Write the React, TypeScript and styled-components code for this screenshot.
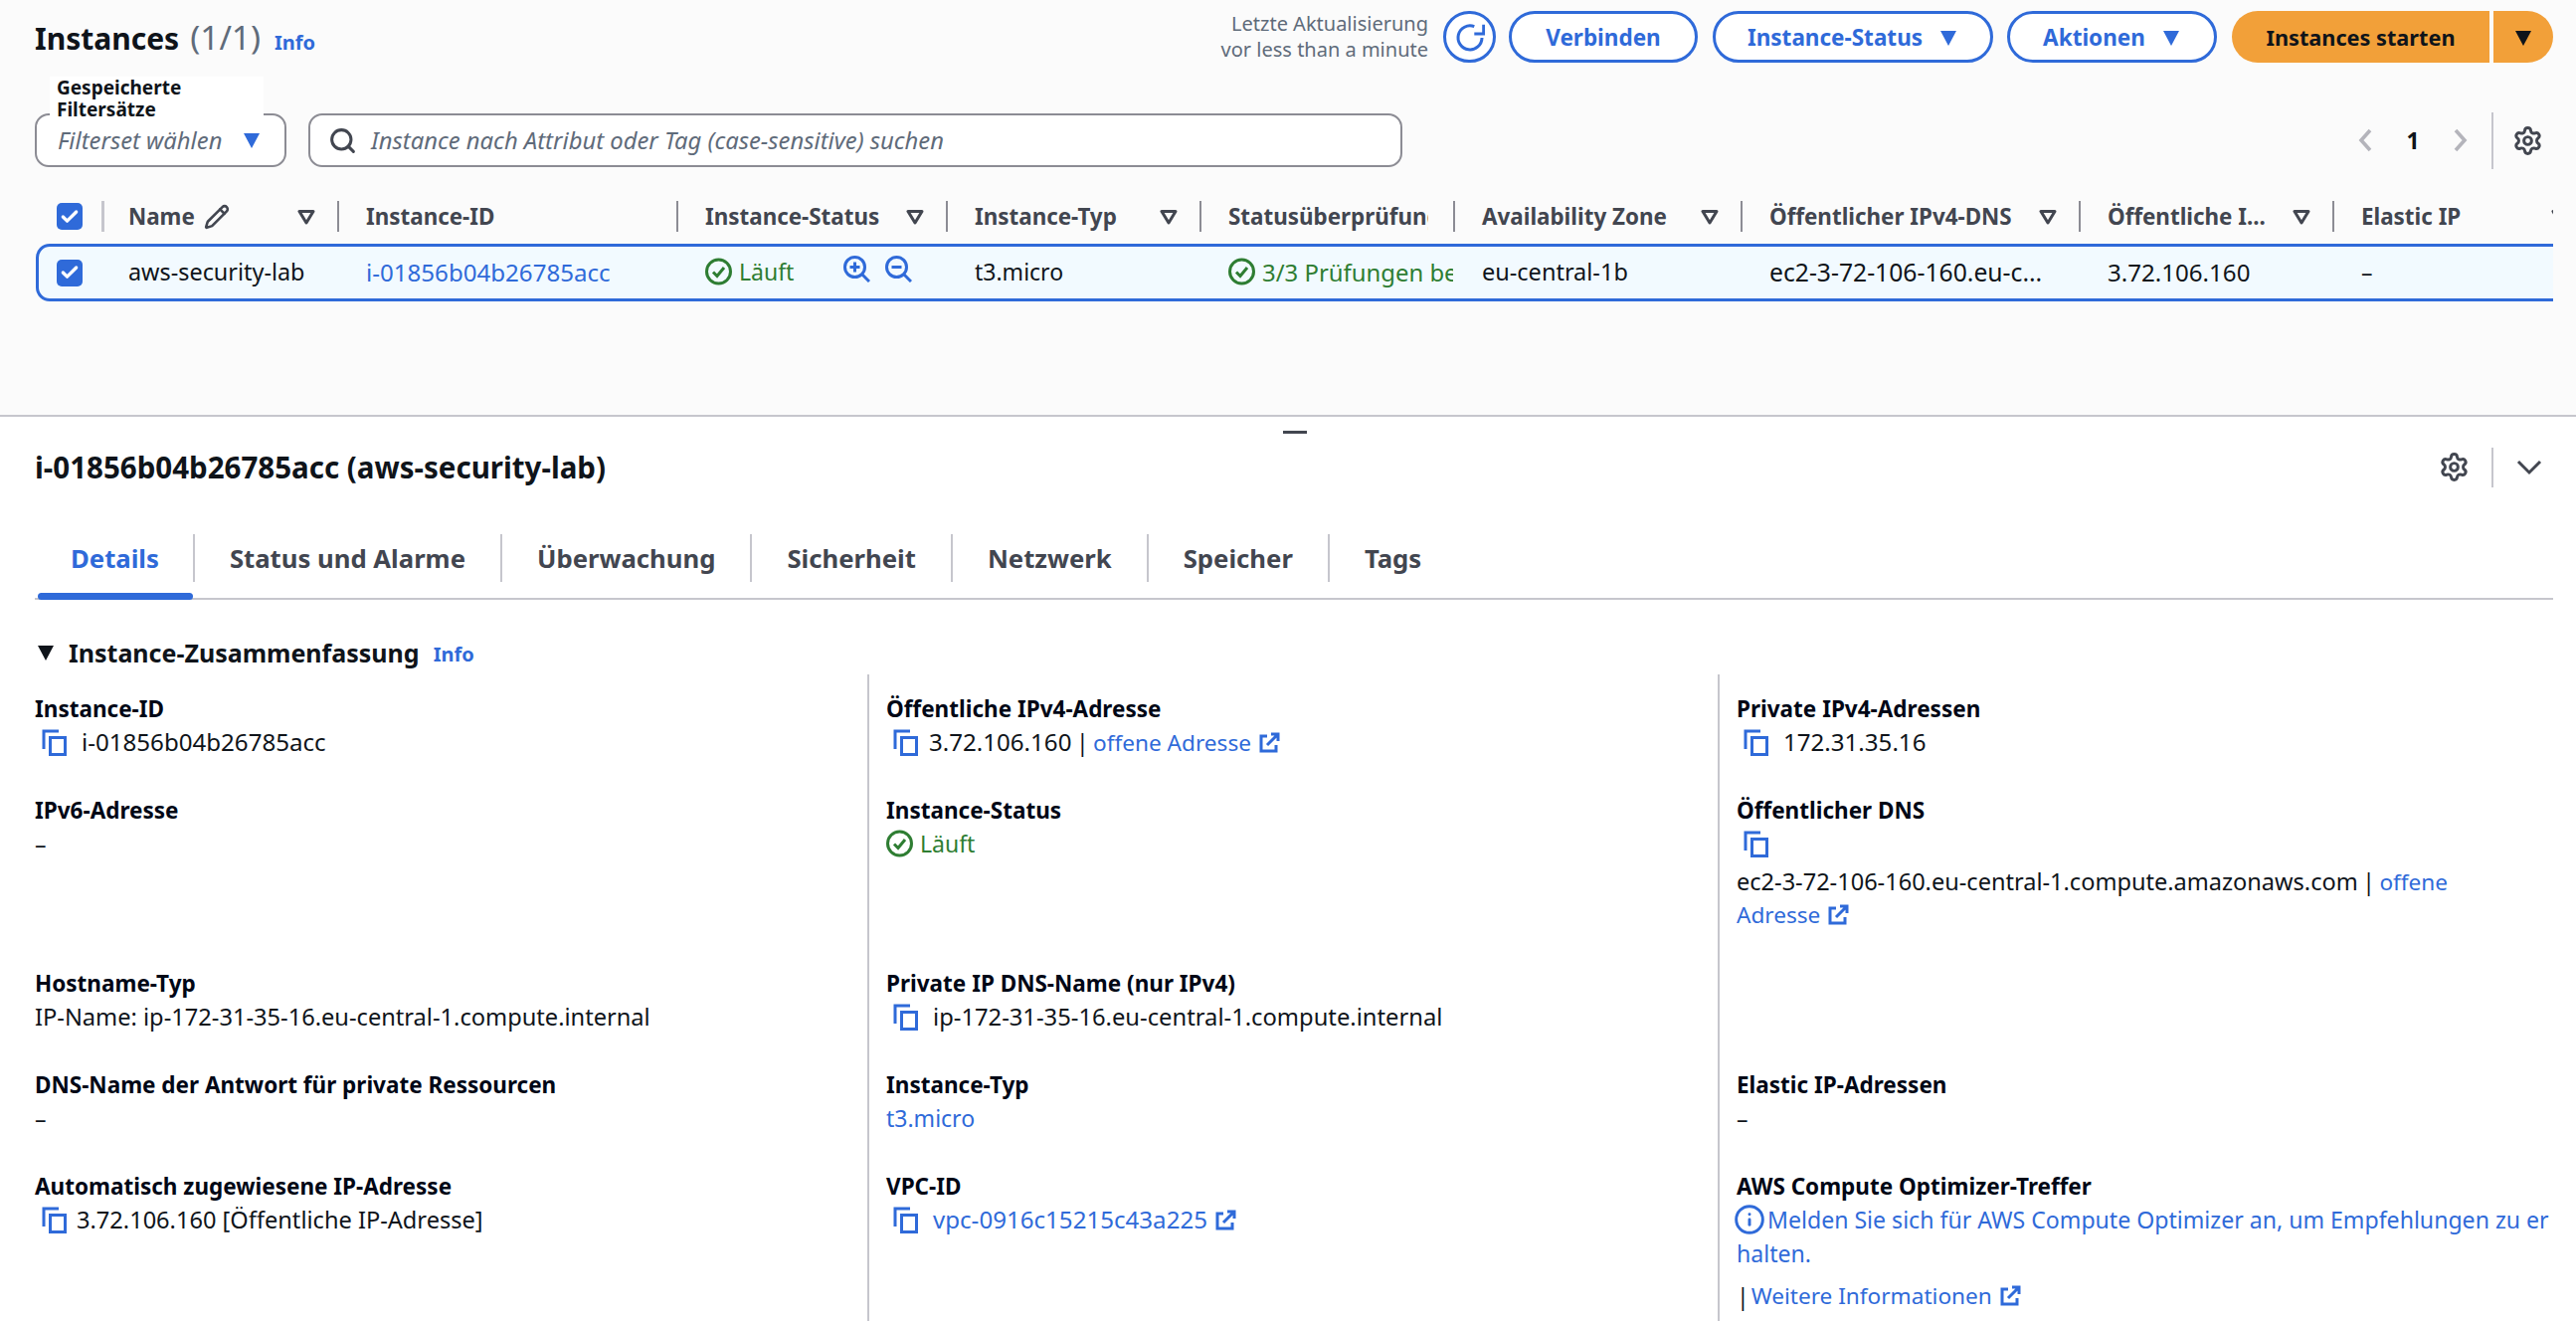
import { ReactNode } from "react";
import styled, { createGlobalStyle } from "styled-components";
import { Info, Pencil, Search, Settings, Check } from "lucide-react";

const BLUE = "#2f6ad9";
const GREEN = "#2e7d32";
const TEXT = "#0f141a";
const MUTED = "#424650";

const GlobalStyle = createGlobalStyle`
  html, body { margin: 0; padding: 0; background: #fff; }
  body {
    font-family: "Noto Sans", "Open Sans", sans-serif;
    font-size: 23px;
    color: ${TEXT};
    width: 2590px;
    height: 1328px;
    overflow: hidden;
  }
  * { box-sizing: border-box; }
`;

const Top = styled.section`
  height: 419px;
  background: #fbfbfb;
  border-bottom: 2px solid #c6c6cd;
`;

const HeaderRow = styled.div`
  display: flex;
  justify-content: space-between;
  align-items: flex-start;
  height: 63px;
  padding: 11px 23px 0 35px;
`;

const Title = styled.h1`
  margin: 4px 0 0;
  font-size: 30px;
  line-height: 44px;
  font-weight: 700;
  display: flex;
  align-items: baseline;
`;

const Count = styled.span`
  font-size: 33.5px;
  font-weight: 400;
  color: #5f6b7a;
  margin: 0 14px 0 11px;
`;

const InfoLink = styled.a`
  font-size: 20px;
  font-weight: 700;
  color: ${BLUE};
`;

const Actions = styled.div`
  display: flex;
  align-items: center;
`;

const Updated = styled.div`
  font-size: 20px;
  line-height: 26px;
  color: #5f6b7a;
  text-align: right;
  margin-right: 15px;
`;

const Pill = styled.button<{ $width: number; $gap?: number }>`
  width: ${(p) => p.$width}px;
  height: 52px;
  margin-right: ${(p) => p.$gap ?? 15}px;
  border: 3px solid ${BLUE};
  border-radius: 26px;
  background: #fff;
  color: ${BLUE};
  font: 700 22.5px "Noto Sans", sans-serif;
  display: flex;
  align-items: center;
  justify-content: center;
  gap: 16px;
  padding: 1px 0 0;
`;

const Primary = styled.button<{ $side?: boolean }>`
  height: 52px;
  width: ${(p) => (p.$side ? 60 : 259)}px;
  margin-left: ${(p) => (p.$side ? 4 : 0)}px;
  border: 0;
  border-radius: ${(p) => (p.$side ? "0 26px 26px 0" : "26px 0 0 26px")};
  background: #f2a039;
  color: ${TEXT};
  font: 700 21.7px "Noto Sans", sans-serif;
  padding: 1px 0 0;
  display: flex;
  align-items: center;
  justify-content: center;
`;

const FilterRow = styled.div`
  display: flex;
  align-items: center;
  margin-top: 51px;
  padding: 0 33px 0 35px;
  height: 54px;
`;

const FilterBox = styled.div`
  position: relative;
  width: 253px;
  height: 54px;
  margin-right: 22px;
  border: 2px solid #8c8c94;
  border-radius: 14px;
  background: #fff;
  display: flex;
  align-items: center;
  justify-content: space-between;
  padding: 0 23px 0 21px;
`;

const FilterLabel = styled.label`
  position: absolute;
  left: 13px;
  top: -39px;
  width: 215px;
  padding-left: 7px;
  background: #fff;
  font-size: 19px;
  line-height: 22px;
  font-weight: 700;
  color: ${TEXT};
`;

const Placeholder = styled.span`
  font-size: 23.8px;
  font-style: italic;
  color: #5f6b7a;
`;

const SearchBox = styled.div`
  width: 1100px;
  height: 54px;
  border: 2px solid #8c8c94;
  border-radius: 14px;
  background: #fff;
  display: flex;
  align-items: center;
  gap: 14px;
  padding-left: 18px;
`;

const Pager = styled.div`
  margin-left: auto;
  display: flex;
  align-items: center;
  height: 57px;
`;

const PageNumber = styled.span`
  width: 14px;
  margin: 0 34px;
  text-align: center;
  font-weight: 700;
  color: ${TEXT};
`;

const PagerDivider = styled.span`
  width: 2px;
  height: 57px;
  background: #c6c6cd;
  margin: 0 19px 0 24px;
`;

const Table = styled.div`
  width: 2567px;
  overflow: hidden;
  padding: 34px 0 0 36px;
`;

const HeadRow = styled.div`
  display: grid;
  grid-template-columns: 66px 237px 341px 271px 255px 255px 289px 340px 255px 260px;
  height: 43px;
  width: 2700px;
`;

const HeadCell = styled.div<{ $light?: boolean }>`
  height: 31px;
  border-left: ${(p) => (p.$light ? "3px solid #c6c6cd" : "2px solid #8c8c94")};
  padding: 0 22px 0 ${(p) => (p.$light ? 24 : 27)}px;
  display: flex;
  align-items: center;
  justify-content: space-between;
  font-size: 22.4px;
  font-weight: 700;
  color: ${MUTED};
  white-space: nowrap;
`;

const HeadBox = styled.div`
  height: 31px;
  display: flex;
  align-items: center;
`;

const HeadLabel = styled.span<{ $clip?: boolean }>`
  display: flex;
  align-items: center;
  gap: 9px;
  ${(p) => p.$clip && "width: 201px; overflow: hidden;"}
`;

const CheckBox = styled.span<{ $inset: number }>`
  width: 26px;
  height: 27px;
  margin-left: ${(p) => p.$inset}px;
  border-radius: 5px;
  background: ${BLUE};
  display: flex;
  align-items: center;
  justify-content: center;
`;

const BodyRow = styled.div`
  display: grid;
  grid-template-columns: 61px 239px 341px 271px 255px 255px 289px 340px 255px 260px;
  width: 2700px;
  height: 58px;
  border: 3px solid ${BLUE};
  border-radius: 14px 0 0 14px;
  background: #f2faff;
`;

const BodyCell = styled.div<{ $first?: boolean }>`
  display: flex;
  align-items: center;
  padding: 0 0 ${(p) => (p.$first ? 0 : 2)}px ${(p) => (p.$first ? 0 : 29)}px;
  white-space: nowrap;
  overflow: hidden;
`;

const Num = styled.span<{ $size?: number }>`
  font-size: ${(p) => p.$size ?? 24.1}px;
`;

const StatusText = styled.span`
  display: inline-flex;
  align-items: center;
  gap: 7px;
  color: ${GREEN};
`;

const ZoomIcons = styled.span`
  display: flex;
  gap: 15px;
  margin: 0 0 6px 50px;
`;

const Link = styled.a`
  color: ${BLUE};
`;

const OutLink = styled(Link)`
  font-size: 22.6px;
`;

const Sep = styled.span`
  margin: 0 -1.5px;
`;

const Bottom = styled.section`
  position: relative;
`;

const Handle = styled.span`
  position: absolute;
  left: 1290px;
  top: 14px;
  width: 24px;
  height: 3px;
  background: #424650;
`;

const DetailHead = styled.div`
  height: 118px;
  padding: 14px 34px 31px 35px;
  display: flex;
  align-items: center;
  justify-content: space-between;
`;

const DetailTitle = styled.h2`
  margin: 0;
  font-size: 29.5px;
  font-weight: 700;
`;

const DetailTools = styled.div`
  display: flex;
  align-items: center;
  color: ${MUTED};
`;

const ToolDivider = styled.span`
  width: 2px;
  height: 40px;
  background: #c6c6cd;
  margin: 0 23px 0 22px;
`;

const Tabs = styled.nav`
  display: flex;
  align-items: flex-start;
  height: 66px;
  margin: 0 23px 0 35px;
  border-bottom: 2px solid #c6c6cd;
  position: relative;
`;

const Tab = styled.a<{ $active?: boolean; $first?: boolean }>`
  height: 48px;
  padding: 0 ${(p) => (p.$first ? 34 : 35)}px 0 ${(p) => (p.$first ? 36 : 35)}px;
  display: flex;
  align-items: center;
  font-size: 25.7px;
  font-weight: 700;
  color: ${(p) => (p.$active ? BLUE : MUTED)};
  border-left: ${(p) => (p.$first ? "0" : "2px solid #c6c6cd")};
`;

const TabBar = styled.span`
  position: absolute;
  left: 3px;
  bottom: -2px;
  width: 156px;
  height: 7px;
  border-radius: 4px;
  background: ${BLUE};
`;

const SectionHead = styled.div`
  height: 75px;
  padding: 35px 0 4px 38px;
  display: flex;
  align-items: center;
  font-size: 25px;
  font-weight: 700;
  line-height: 36px;
`;

const SectionCaret = styled.svg`
  margin-right: 15px;
`;

const SectionInfo = styled(InfoLink)`
  margin-left: 14px;
  margin-top: 4px;
`;

const Summary = styled.div`
  display: grid;
  grid-template-columns: 837px 855px 840px;
  grid-template-rows: 98px 174px 102px 102px 174px;
  margin-left: 35px;
`;

const Cell = styled.div<{ $edge?: boolean; $pad: number }>`
  padding: ${(p) => p.$pad}px 0 0 ${(p) => (p.$edge ? 0 : 17)}px;
  border-left: ${(p) => (p.$edge ? "0" : "2px solid #c6c6cd")};
  line-height: 34px;
`;

const Label = styled.div`
  height: 34px;
  line-height: 36px;
  font-size: 22.5px;
  font-weight: 700;
  color: #000716;
`;

const Value = styled.div<{ $gap?: number }>`
  display: flex;
  align-items: center;
  min-height: 34px;
  gap: ${(p) => p.$gap ?? 15}px;
`;

const CopyWrap = styled.svg`
  margin-left: 7px;
  flex: none;
`;

const Ext = styled.svg`
  margin-left: 8px;
  vertical-align: -2px;
`;

const Dns = styled.div`
  margin-top: 5px;
  line-height: 33px;
`;

const Optimizer = styled.div`
  color: ${BLUE};
  font-size: 23.1px;
`;

const OptimizerIcon = styled(Info)`
  vertical-align: -7px;
  margin: 0 2px 0 -3px;
`;

const Further = styled.div`
  margin-top: 8px;
  display: flex;
  align-items: center;
  gap: 2px;
`;

function Copy() {
  return (
    <CopyWrap width="25" height="27" viewBox="0 0 25 27" fill="none" stroke={BLUE} strokeWidth="3">
      <path d="M2 20V2h15" />
      <rect x="8.5" y="8.5" width="15" height="17" />
    </CopyWrap>
  );
}

function External() {
  return (
    <Ext width="21" height="21" viewBox="0 0 21 21" fill="none" stroke={BLUE} strokeWidth="3">
      <path d="M8 4H2v15h15v-6" />
      <path d="M12 2h7v7M19 2 8 13" />
    </Ext>
  );
}

function Caret({ color, size = 20 }: { color: string; size?: number }) {
  return (
    <svg width={size} height={size} viewBox="0 0 20 20" fill={color}>
      <path d="M2 3h16L10 18z" />
    </svg>
  );
}

function SortCaret() {
  return (
    <svg width="18" height="16" viewBox="0 0 18 16" fill="none" stroke={MUTED} strokeWidth="3" strokeLinejoin="round">
      <path d="M2 2.5h14L9 14z" />
    </svg>
  );
}

function TickBox({ inset }: { inset: number }) {
  return (
    <CheckBox $inset={inset}>
      <Check size={20} color="#fff" strokeWidth={4} />
    </CheckBox>
  );
}

function RunningIcon() {
  return (
    <svg width="27" height="28" viewBox="0 0 27 28" fill="none" stroke={GREEN} strokeWidth="3">
      <circle cx="13.5" cy="14" r="12" />
      <path d="M8 14.5l4 4 7-8.5" />
    </svg>
  );
}

function Lens({ plus }: { plus?: boolean }) {
  return (
    <svg width="27" height="27" viewBox="0 0 27 27" fill="none" stroke={BLUE} strokeWidth="3">
      <circle cx="11.5" cy="11.5" r="10" />
      <path d="M19 19l7 7" />
      <path d={plus ? "M6.5 11.5h10M11.5 6.5v10" : "M6.5 11.5h10"} />
    </svg>
  );
}

function Chevron({ dir }: { dir: "left" | "right" }) {
  return (
    <svg width="14" height="24" viewBox="0 0 14 24" fill="none" stroke="#b4b4bb" strokeWidth="3.6">
      <path d={dir === "left" ? "M12 2 3 12l9 10" : "M2 2l9 10L2 22"} />
    </svg>
  );
}

const heads = ["Name", "Instance-ID", "Instance-Status", "Instance-Typ", "Statusüberprüfung", "Availability Zone", "Öffentlicher IPv4-DNS", "Öffentliche I...", "Elastic IP"];

function Field({ label, children, col, row }: { label?: string; children?: ReactNode; col: number; row: number }) {
  return (
    <Cell $edge={col === 0} $pad={row === 0 ? 17 : 21}>
      {label && <Label>{label}</Label>}
      {children}
    </Cell>
  );
}

export default function App() {
  return (
    <>
      <GlobalStyle />
      <Top>
        <HeaderRow>
          <Title>
            Instances<Count>(1/1)</Count>
            <InfoLink>Info</InfoLink>
          </Title>
          <Actions>
            <Updated>
              Letzte Aktualisierung
              <br />
              vor less than a minute
            </Updated>
            <Pill $width={53} $gap={13}>
              <svg width="30" height="30" viewBox="0 0 30 30" fill="none" stroke={BLUE} strokeWidth="3">
                <path d="M19.3 3.7A12 12 0 1 0 27 15" />
                <path d="M19.3 11h9.4V1.7" />
              </svg>
            </Pill>
            <Pill $width={190}>Verbinden</Pill>
            <Pill $width={282} $gap={14}>
              Instance-Status <Caret color={BLUE} />
            </Pill>
            <Pill $width={211}>
              Aktionen <Caret color={BLUE} />
            </Pill>
            <Primary>Instances starten</Primary>
            <Primary $side>
              <Caret color={TEXT} />
            </Primary>
          </Actions>
        </HeaderRow>
        <FilterRow>
          <FilterBox>
            <FilterLabel>
              Gespeicherte
              <br />
              Filtersätze
            </FilterLabel>
            <Placeholder>Filterset wählen</Placeholder>
            <Caret color={BLUE} />
          </FilterBox>
          <SearchBox>
            <Search size={29} color={MUTED} strokeWidth={2.5} />
            <Placeholder>Instance nach Attribut oder Tag (case-sensitive) suchen</Placeholder>
          </SearchBox>
          <Pager>
            <Chevron dir="left" />
            <PageNumber>1</PageNumber>
            <Chevron dir="right" />
            <PagerDivider />
            <Settings size={31} color={MUTED} strokeWidth={2.3} />
          </Pager>
        </FilterRow>
        <Table>
          <HeadRow>
            <HeadBox>
              <TickBox inset={21} />
            </HeadBox>
            {heads.map((h, i) => (
              <HeadCell key={h} $light={i === 0}>
                <HeadLabel $clip={i === 4}>
                  {h}
                  {i === 0 && <Pencil size={26} strokeWidth={2.4} />}
                </HeadLabel>
                {i !== 1 && i !== 4 && <SortCaret />}
              </HeadCell>
            ))}
          </HeadRow>
          <BodyRow>
            <BodyCell $first>
              <TickBox inset={18} />
            </BodyCell>
            <BodyCell>
              <Num $size={23.4}>aws-security-lab</Num>
            </BodyCell>
            <BodyCell>
              <Link>
                <Num>i-01856b04b26785acc</Num>
              </Link>
            </BodyCell>
            <BodyCell>
              <StatusText>
                <RunningIcon />
                Läuft
              </StatusText>
              <ZoomIcons>
                <Lens plus />
                <Lens />
              </ZoomIcons>
            </BodyCell>
            <BodyCell>t3.micro</BodyCell>
            <BodyCell>
              <StatusText>
                <RunningIcon />
                <Num $size={23.9}>3/3 Prüfungen be</Num>
              </StatusText>
            </BodyCell>
            <BodyCell>
              <Num $size={23.5}>eu-central-1b</Num>
            </BodyCell>
            <BodyCell>
              <Num $size={24.7}>ec2-3-72-106-160.eu-c...</Num>
            </BodyCell>
            <BodyCell>
              <Num>3.72.106.160</Num>
            </BodyCell>
            <BodyCell>–</BodyCell>
          </BodyRow>
        </Table>
      </Top>
      <Bottom>
        <Handle />
        <DetailHead>
          <DetailTitle>i-01856b04b26785acc (aws-security-lab)</DetailTitle>
          <DetailTools>
            <Settings size={31} strokeWidth={2.3} />
            <ToolDivider />
            <svg width="26" height="16" viewBox="0 0 26 16" fill="none" stroke={MUTED} strokeWidth="3">
              <path d="M2 2l11 11L24 2" />
            </svg>
          </DetailTools>
        </DetailHead>
        <Tabs>
          <Tab $active $first>
            Details
          </Tab>
          <Tab>Status und Alarme</Tab>
          <Tab>Überwachung</Tab>
          <Tab>Sicherheit</Tab>
          <Tab>Netzwerk</Tab>
          <Tab>Speicher</Tab>
          <Tab>Tags</Tab>
          <TabBar />
        </Tabs>
        <SectionHead>
          <SectionCaret width="16" height="15" viewBox="0 0 16 15" fill={TEXT}>
            <path d="M0 0h16L8 15z" />
          </SectionCaret>
          Instance-Zusammenfassung
          <SectionInfo>Info</SectionInfo>
        </SectionHead>
        <Summary>
          <Field col={0} row={0} label="Instance-ID">
            <Value>
              <Copy />
              <Num>i-01856b04b26785acc</Num>
            </Value>
          </Field>
          <Field col={1} row={0} label="Öffentliche IPv4-Adresse">
            <Value $gap={11}>
              <Copy />
              <span>
                <Num>3.72.106.160</Num> <Sep>|</Sep> <OutLink>offene Adresse</OutLink>
                <External />
              </span>
            </Value>
          </Field>
          <Field col={2} row={0} label="Private IPv4-Adressen">
            <Value>
              <Copy />
              <Num>172.31.35.16</Num>
            </Value>
          </Field>
          <Field col={0} row={1} label="IPv6-Adresse">
            –
          </Field>
          <Field col={1} row={1} label="Instance-Status">
            <StatusText>
              <RunningIcon />
              Läuft
            </StatusText>
          </Field>
          <Field col={2} row={1} label="Öffentlicher DNS">
            <Value>
              <Copy />
            </Value>
            <Dns>
              <Num $size={23.56}>ec2-3-72-106-160.eu-central-1.compute.amazonaws.com</Num> <Sep>|</Sep> <OutLink>offene</OutLink>
              <br />
              <OutLink>Adresse</OutLink>
              <External />
            </Dns>
          </Field>
          <Field col={0} row={2} label="Hostname-Typ">
            <Num $size={23.63}>IP-Name: ip-172-31-35-16.eu-central-1.compute.internal</Num>
          </Field>
          <Field col={1} row={2} label="Private IP DNS-Name (nur IPv4)">
            <Value>
              <Copy />
              <Num $size={23.76}>ip-172-31-35-16.eu-central-1.compute.internal</Num>
            </Value>
          </Field>
          <Field col={2} row={2} />
          <Field col={0} row={3} label="DNS-Name der Antwort für private Ressourcen">
            –
          </Field>
          <Field col={1} row={3} label="Instance-Typ">
            <Link>t3.micro</Link>
          </Field>
          <Field col={2} row={3} label="Elastic IP-Adressen">
            –
          </Field>
          <Field col={0} row={4} label="Automatisch zugewiesene IP-Adresse">
            <Value $gap={10}>
              <Copy />
              <Num $size={23.6}>3.72.106.160 [Öffentliche IP-Adresse]</Num>
            </Value>
          </Field>
          <Field col={1} row={4} label="VPC-ID">
            <Value>
              <Copy />
              <span>
                <Link>
                  <Num>vpc-0916c15215c43a225</Num>
                </Link>
                <External />
              </span>
            </Value>
          </Field>
          <Field col={2} row={4} label="AWS Compute Optimizer-Treffer">
            <Optimizer>
              <OptimizerIcon size={32} strokeWidth={2.2} />
              Melden Sie sich für AWS Compute Optimizer an, um Empfehlungen zu er
              <br />
              halten.
            </Optimizer>
            <Further>
              <span>|</span>
              <span>
                <OutLink>Weitere Informationen</OutLink>
                <External />
              </span>
            </Further>
          </Field>
        </Summary>
      </Bottom>
    </>
  );
}
